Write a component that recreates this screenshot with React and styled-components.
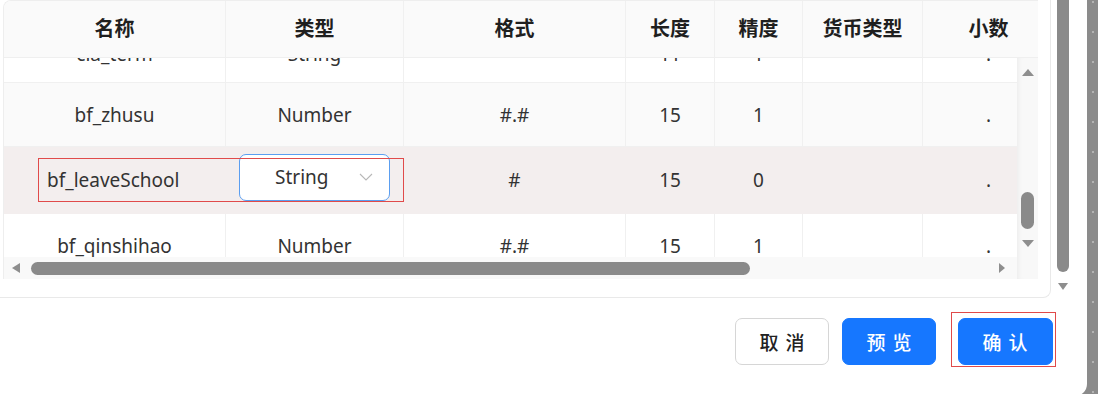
import React from 'react';
import styled, { createGlobalStyle } from 'styled-components';

const GlobalStyle = createGlobalStyle`
  html, body { margin: 0; padding: 0; }
  body {
    background: #8b8b8b;
    font-family: "Noto Sans", "Noto Sans CJK SC", sans-serif;
    overflow: hidden;
  }
`;

const COLS = '222px 178px 222px 89px 88px 120px 132px';

const Page = styled.div`
  width: 1098px;
  height: 394px;
  display: flex;
  overflow: hidden;
  background: #8b8b8b;
`;

const Dialog = styled.div`
  width: 1087px;
  height: 396px;
  flex-shrink: 0;
  background: #fff;
  border-bottom-right-radius: 12px;
  display: flex;
  flex-direction: column;
  overflow: hidden;
`;

const Strip = styled.div`
  width: 11px;
  height: 394px;
  background: radial-gradient(circle at 6px 2px, #b3b3b3 0.9px, transparent 1.4px) 0 0 / 11px 30px repeat-y, #8b8b8b;
`;

const DialogBody = styled.div`
  display: flex;
  height: 298px;
  flex-shrink: 0;
`;

const Card = styled.div`
  box-sizing: border-box;
  width: 1051px;
  height: 298px;
  padding: 0 12px 18px 3px;
  border-right: 1px solid #e9e9e9;
  border-bottom: 1px solid #e9e9e9;
  border-bottom-right-radius: 8px;
`;

const Table = styled.div`
  box-sizing: border-box;
  width: 1035px;
  height: 279px;
  border-left: 1px solid #eeeeee;
  border-top: 1px solid #eeeeee;
  border-top-left-radius: 8px;
  display: grid;
  grid-template-columns: 1013px 21px;
  grid-template-rows: 57px 199px 22px;
  overflow: hidden;
`;

const HeadRow = styled.div`
  grid-column: 1 / 3;
  display: grid;
  grid-template-columns: ${COLS};
  background: #fafafa;
  border-bottom: 1px solid #efefef;
  box-sizing: border-box;
  overflow: hidden;
`;

const HeadCell = styled.div`
  display: flex;
  align-items: center;
  justify-content: center;
  box-sizing: border-box;
  padding-bottom: 4px;
  border-right: 1px solid #f0f0f0;
  font-family: "Noto Sans CJK SC", sans-serif;
  font-weight: 700;
  font-size: 20px;
  color: #1f1f1f;
`;

const Viewport = styled.div`
  grid-column: 1;
  grid-row: 2;
  overflow: hidden;
`;

const Rows = styled.div`
  margin-top: -33px;
`;

const Row = styled.div`
  position: relative;
  display: grid;
  grid-template-columns: ${COLS};
  height: ${p => p.$h}px;
  box-sizing: border-box;
  border-bottom: 1px solid ${p => (p.$active ? '#f3eeee' : '#f0f0f0')};
  background: ${p => p.$bg};
`;

const Cell = styled.div`
  display: flex;
  align-items: center;
  justify-content: ${p => (p.$left ? 'flex-start' : 'center')};
  padding-left: ${p => (p.$left ? '43px' : '0')};
  box-sizing: border-box;
  border-right: 1px solid ${p => (p.$active ? 'transparent' : '#f0f0f0')};
  font-size: 19px;
  color: #333;
  white-space: nowrap;
`;

const Select = styled.div`
  box-sizing: border-box;
  width: 151px;
  height: 47px;
  margin-top: -6px;
  border: 1px solid #5b9ef0;
  border-radius: 7px;
  background: #fff;
  display: flex;
  align-items: center;
  justify-content: space-between;
  padding: 0 16px 0 35px;
  font-size: 19px;
  color: #333;
`;

const Mark = styled.div`
  position: absolute;
  left: 34px;
  top: 11px;
  width: 366px;
  height: 44px;
  box-sizing: border-box;
  border: 1.5px solid #e04a4a;
  pointer-events: none;
`;

const VScroll = styled.div`
  grid-column: 2;
  grid-row: 2 / 4;
  background: #f8f8f8;
  box-shadow: inset 5px 0 6px -5px rgba(0, 0, 0, 0.08);
  display: flex;
  flex-direction: column;
  align-items: center;
  padding-top: 11px;
`;

const VThumb = styled.div`
  width: 13px;
  height: 37px;
  border-radius: 7px;
  background: #8a8a8a;
  margin-top: ${p => p.$offset}px;
`;

const DownSlot = styled.div`
  margin-top: 11px;
`;

const HScroll = styled.div`
  grid-column: 1;
  grid-row: 3;
  background: #f9f9f9;
  display: flex;
  align-items: center;
  padding: 0 12px 0 8px;
`;

const HThumb = styled.div`
  width: 719px;
  height: 13px;
  border-radius: 7px;
  background: #8a8a8a;
  margin-left: ${p => p.$offset}px;
`;

const Push = styled.div`
  flex: 1;
`;

const DialogScroll = styled.div`
  width: 36px;
  display: flex;
  flex-direction: column;
  padding-left: 6px;
  box-sizing: border-box;
`;

const DThumb = styled.div`
  width: 12px;
  height: 272px;
  background: #8a8a8a;
  border-radius: 0 0 6px 6px;
`;

const DArrow = styled.div`
  width: 12px;
  display: flex;
  justify-content: center;
  margin-top: 11px;
`;

const Footer = styled.div`
  display: flex;
  justify-content: flex-end;
  align-items: flex-start;
  gap: 13px;
  padding: 20px 31px 0 0;
`;

const Button = styled.button`
  width: ${p => p.$w || 94}px;
  height: 47px;
  box-sizing: border-box;
  border-radius: 7px;
  border: 1px solid ${p => (p.$primary ? '#1677ff' : '#d6d6d6')};
  background: ${p => (p.$primary ? '#1677ff' : '#fff')};
  color: ${p => (p.$primary ? '#fff' : '#222')};
  font-family: "Noto Sans CJK SC", sans-serif;
  font-size: 19px;
  font-weight: 500;
  letter-spacing: 7px;
  padding: 0 0 0 7px;
  display: flex;
  align-items: center;
  justify-content: center;
`;

const ConfirmMark = styled.div`
  margin: -6px 0 0 2px;
  padding: 4.5px 2.5px 1.5px 5.5px;
  border: 1.5px solid #e04a4a;
`;

const Tri = ({ dir, w = 12, h = 7 }) => {
  const pts = {
    up: `0,${h} ${w / 2},0 ${w},${h}`,
    down: `0,0 ${w},0 ${w / 2},${h}`,
    left: `${w},0 ${w},${h} 0,${h / 2}`,
    right: `0,0 ${w},${h / 2} 0,${h}`,
  }[dir];
  return (
    <svg width={w} height={h} viewBox={`0 0 ${w} ${h}`} style={{ display: 'block', flexShrink: 0 }}>
      <polygon points={pts} fill="#8e8e8e" />
    </svg>
  );
};

const Chevron = () => (
  <svg width="14" height="8" viewBox="0 0 14 8" style={{ display: 'block' }}>
    <path d="M1 1 L7 7 L13 1" fill="none" stroke="#b8b8b8" strokeWidth="1.1" />
  </svg>
);

const headers = ['名称', '类型', '格式', '长度', '精度', '货币类型', '小数'];

const rows = [
  { h: 58, bg: '#fff', v: ['cla_term', 'String', '', '11', '1', '', '.'] },
  { h: 64, bg: '#fafafa', v: ['bf_zhusu', 'Number', '#.#', '15', '1', '', '.'] },
  { h: 67, bg: '#f3eeee', active: true, v: ['bf_leaveSchool', 'String', '#', '15', '0', '', '.'] },
  { h: 64, bg: '#fff', v: ['bf_qinshihao', 'Number', '#.#', '15', '1', '', '.'] },
];

export default function App() {
  return (
    <>
      <GlobalStyle />
      <Page>
        <Dialog>
          <DialogBody>
            <Card>
              <Table>
                <HeadRow>
                  {headers.map(h => (
                    <HeadCell key={h}>{h}</HeadCell>
                  ))}
                </HeadRow>
                <Viewport>
                  <Rows>
                    {rows.map((r, i) => (
                      <Row key={i} $h={r.h} $bg={r.bg} $active={r.active}>
                        {r.v.map((c, j) => {
                          if (r.active && j === 0)
                            return (
                              <Cell key={j} $left $active>
                                {c}
                              </Cell>
                            );
                          if (r.active && j === 1)
                            return (
                              <Cell key={j} $active>
                                <Select>
                                  <span>{c}</span>
                                  <Chevron />
                                </Select>
                              </Cell>
                            );
                          return (
                            <Cell key={j} $active={r.active}>
                              {c}
                            </Cell>
                          );
                        })}
                        {r.active && <Mark />}
                      </Row>
                    ))}
                  </Rows>
                </Viewport>
                <VScroll>
                  <Tri dir="up" w={12} h={7} />
                  <VThumb $offset={116} />
                  <DownSlot>
                    <Tri dir="down" w={12} h={7} />
                  </DownSlot>
                </VScroll>
                <HScroll>
                  <Tri dir="left" w={8} h={10} />
                  <HThumb $offset={11} />
                  <Push />
                  <Tri dir="right" w={6} h={10} />
                </HScroll>
              </Table>
            </Card>
            <DialogScroll>
              <DThumb />
              <DArrow>
                <Tri dir="down" w={10} h={7} />
              </DArrow>
            </DialogScroll>
          </DialogBody>
          <Footer>
            <Button>取消</Button>
            <Button $primary>预览</Button>
            <ConfirmMark>
              <Button $primary $w={95}>确认</Button>
            </ConfirmMark>
          </Footer>
        </Dialog>
        <Strip />
      </Page>
    </>
  );
}
